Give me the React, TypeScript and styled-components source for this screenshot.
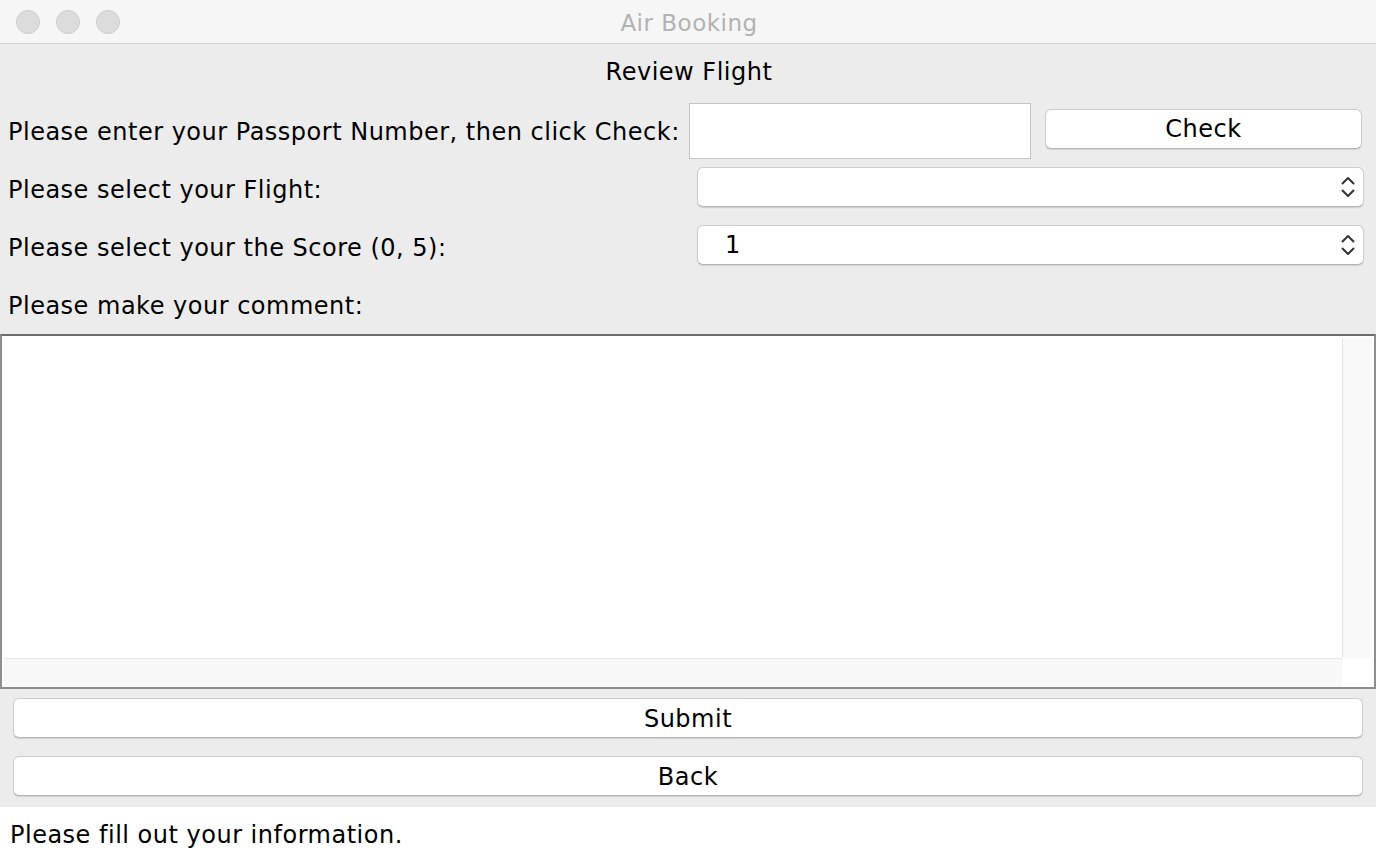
import React from "react";
import styled, { createGlobalStyle } from "styled-components";

const Global = createGlobalStyle`
  html, body { margin: 0; padding: 0; background: #ffffff; }
  body { font-family: "DejaVu Sans", "Liberation Sans", sans-serif; }
  * { box-sizing: border-box; }
`;

const Window = styled.div`
  width: 1376px;
  height: 860px;
  display: flex;
  flex-direction: column;
  background: #ffffff;
  color: #000;
  font-family: "DejaVu Sans", "Liberation Sans", sans-serif;
  font-size: 24px;
  letter-spacing: 0.5px;
  overflow: hidden;
`;

const TitleBar = styled.div`
  height: 44px;
  flex: none;
  background: #f6f6f6;
  border-bottom: 1px solid #d1d1d1;
  display: grid;
  grid-template-columns: 1fr auto 1fr;
  align-items: center;
`;

const Lights = styled.div`
  display: flex;
  gap: 16px;
  padding-left: 16px;
`;

const Light = styled.span`
  width: 24px;
  height: 24px;
  border-radius: 50%;
  background: #dcdcdc;
  border: 1px solid #cdcdcd;
`;

const Title = styled.div`
  color: #b2b2b2;
  font-size: 23px;
  line-height: 30px;
  padding-left: 2px;
  padding-top: 2px;
`;

const Panel = styled.div`
  background: #ececec;
  height: 763px;
  flex: none;
  display: flex;
  flex-direction: column;
`;

const Heading = styled.div`
  height: 58px;
  padding-top: 13px;
  line-height: 30px;
  text-align: center;
  padding-left: 2px;
`;

const Row = styled.div<{ $cols: string; $right: number }>`
  height: 58px;
  display: grid;
  grid-template-columns: ${(p) => p.$cols};
  align-items: center;
  padding-left: 8px;
  padding-right: ${(p) => p.$right}px;
`;

const Label = styled.span`
  white-space: nowrap;
  line-height: 30px;
  padding-top: 2px;
`;

const TextField = styled.div`
  height: 56px;
  background: #fff;
  border: 1px solid #c3c3c3;
  margin-bottom: 1px;
`;

const Button = styled.div<{ $offset?: number }>`
  height: 40px;
  background: #ffffff;
  border: 1px solid #cdcdcd;
  border-bottom-color: #b4b4b4;
  border-radius: 6px;
  box-shadow: 0 1px 1px rgba(0, 0, 0, 0.12);
  display: flex;
  align-items: center;
  justify-content: center;
  line-height: 30px;
  padding-top: 1px;
  margin-bottom: 5px;
  margin-left: ${(p) => p.$offset ?? 0}px;
`;

const Combo = styled.div`
  height: 40px;
  background: #ffffff;
  border: 1px solid #cdcdcd;
  border-bottom-color: #b4b4b4;
  border-radius: 6px;
  box-shadow: 0 1px 1px rgba(0, 0, 0, 0.12);
  display: flex;
  align-items: center;
  justify-content: space-between;
  padding: 0 7px 0 27px;
  margin-bottom: 5px;
`;

const ComboValue = styled.span`
  line-height: 30px;
`;

const TextAreaBox = styled.div`
  height: 355px;
  flex: none;
  background: #ffffff;
  border-top: 2px solid #6d6d6d;
  border-left: 2px solid #8e8e8e;
  border-right: 2px solid #8e8e8e;
  border-bottom: 2px solid #8e8e8e;
  display: grid;
  grid-template-columns: 1fr 30px;
  grid-template-rows: 1fr 29px;
  padding: 2px 2px 0 2px;
`;

const Editor = styled.div`
  background: #ffffff;
`;

const VScroll = styled.div`
  background: #f9f9f9;
  border-left: 1px solid #e6e6e6;
`;

const HScroll = styled.div`
  background: #f8f8f8;
  border-top: 1px solid #e6e6e6;
`;

const Corner = styled.div`
  background: #ffffff;
`;

const ButtonRow = styled.div`
  height: 58px;
  display: flex;
  align-items: center;
  padding: 0 13px 0 13px;
  & > * {
    flex: 1;
    margin-bottom: 0;
  }
`;

const Status = styled.div`
  flex: 1;
  background: #ffffff;
  padding: 13px 0 0 10px;
  line-height: 30px;
`;

const Arrows = () => (
  <svg width="16" height="22" viewBox="0 0 16 22" fill="none">
    <path d="M2.5 7.5 L8 2 L13.5 7.5" stroke="#333" strokeWidth="2" strokeLinecap="round" strokeLinejoin="round" />
    <path d="M2.5 14.5 L8 20 L13.5 14.5" stroke="#333" strokeWidth="2" strokeLinecap="round" strokeLinejoin="round" />
  </svg>
);

export default function App() {
  return (
    <>
      <Global />
      <Window>
        <TitleBar>
          <Lights>
            <Light />
            <Light />
            <Light />
          </Lights>
          <Title>Air Booking</Title>
          <div />
        </TitleBar>
        <Panel>
          <Heading>Review Flight</Heading>
          <Row $cols="681px 342px 1fr" $right={14}>
            <Label>Please enter your Passport Number, then click Check:</Label>
            <TextField />
            <Button $offset={14}>Check</Button>
          </Row>
          <Row $cols="689px 1fr" $right={12}>
            <Label>Please select your Flight:</Label>
            <Combo>
              <ComboValue />
              <Arrows />
            </Combo>
          </Row>
          <Row $cols="689px 1fr" $right={12}>
            <Label>Please select your the Score (0, 5):</Label>
            <Combo>
              <ComboValue>1</ComboValue>
              <Arrows />
            </Combo>
          </Row>
          <Row $cols="1fr" $right={0}>
            <Label>Please make your comment:</Label>
          </Row>
          <TextAreaBox>
            <Editor />
            <VScroll />
            <HScroll />
            <Corner />
          </TextAreaBox>
          <ButtonRow>
            <Button>Submit</Button>
          </ButtonRow>
          <ButtonRow>
            <Button>Back</Button>
          </ButtonRow>
        </Panel>
        <Status>Please fill out your information.</Status>
      </Window>
    </>
  );
}
